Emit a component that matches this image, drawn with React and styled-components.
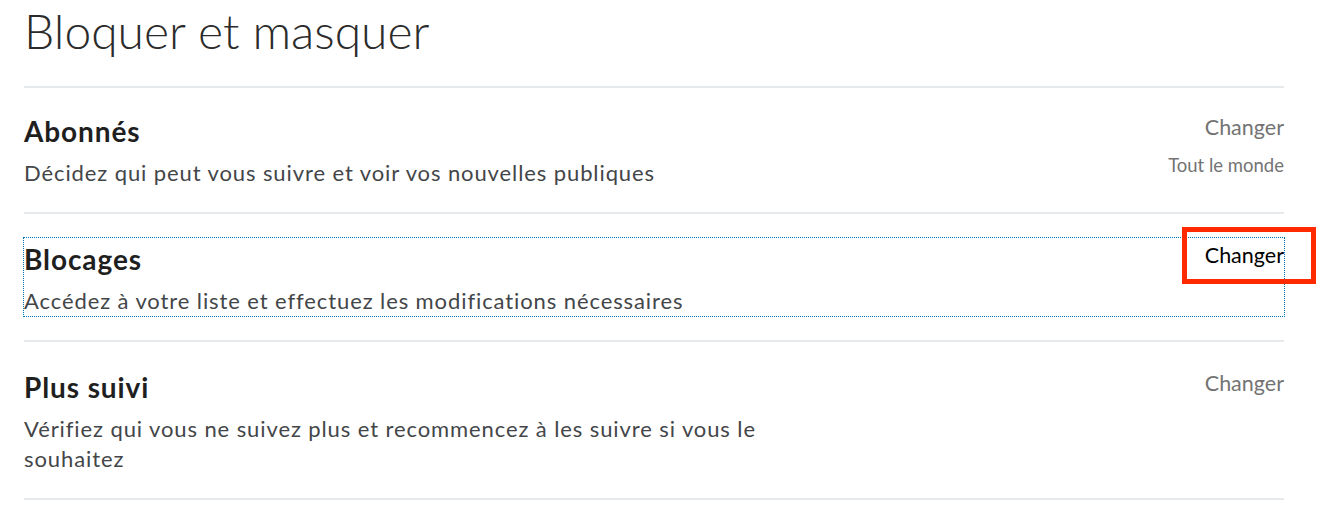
import React from 'react'
import styled, { createGlobalStyle } from 'styled-components'

const GlobalStyle = createGlobalStyle`
  html, body {
    margin: 0;
    padding: 0;
    background: #ffffff;
  }
  body {
    font-family: Lato, "Open Sans", "Liberation Sans", sans-serif;
    -webkit-font-smoothing: antialiased;
  }
`

const Page = styled.div`
  width: 1260px;
  padding: 0 41px 0 24px;
`

const Title = styled.h1`
  margin: 0;
  height: 86px;
  font-size: 48px;
  font-weight: 300;
  line-height: 62px;
  color: #2b2b2b;
`

const List = styled.ul`
  list-style: none;
  margin: 0;
  padding: 0;
`

const Item = styled.li`
  border-top: 2px solid #e6e9ec;
  padding: 22px 0 24px;
  &:last-child {
    border-bottom: 2px solid #e6e9ec;
  }
  & + & {
    padding-top: 24px;
  }
`

const RowLink = styled.a`
  position: relative;
  display: flex;
  justify-content: space-between;
  align-items: flex-start;
  text-decoration: none;
  outline: ${p => (p.$focused ? '1px dotted #0077b5' : 'none')};
  outline-offset: 0;
`

const Text = styled.div`
  max-width: 775px;
`

const Heading = styled.h3`
  margin: 0;
  font-size: 28px;
  font-weight: 700;
  letter-spacing: 0.9px;
  line-height: 42px;
  color: #1f1f1f;
`

const Description = styled.p`
  margin: 6px 0 0;
  font-size: 22px;
  letter-spacing: 0.9px;
  line-height: 30px;
  color: #434649;
`

const Side = styled.div`
  display: flex;
  flex-direction: column;
  align-items: flex-end;
  padding-top: 2px;
`

const Action = styled.span`
  font-size: 21.5px;
  line-height: 30px;
  color: ${p => (p.$active ? '#000000' : '#737373')};
`

const Value = styled.span`
  margin-top: 12px;
  font-size: 18.5px;
  line-height: 22px;
  color: #737373;
`

const Highlight = styled.span`
  position: absolute;
  top: -11px;
  right: -32px;
  width: 134px;
  height: 57px;
  box-sizing: border-box;
  border: 5px solid #ff2a00;
  pointer-events: none;
`

const sections = [
  {
    title: 'Abonnés',
    text: 'Décidez qui peut vous suivre et voir vos nouvelles publiques',
    value: 'Tout le monde',
  },
  {
    title: 'Blocages',
    text: 'Accédez à votre liste et effectuez les modifications nécessaires',
    focused: true,
  },
  {
    title: 'Plus suivi',
    text: 'Vérifiez qui vous ne suivez plus et recommencez à les suivre si vous le souhaitez',
  },
]

export default function App() {
  return (
    <>
      <GlobalStyle />
      <Page>
        <Title>Bloquer et masquer</Title>
        <List>
          {sections.map(s => (
            <Item key={s.title}>
              <RowLink href="#" $focused={s.focused}>
                <Text>
                  <Heading>{s.title}</Heading>
                  <Description>{s.text}</Description>
                </Text>
                <Side>
                  <Action $active={s.focused}>Changer</Action>
                  {s.value && <Value>{s.value}</Value>}
                </Side>
                {s.focused && <Highlight />}
              </RowLink>
            </Item>
          ))}
        </List>
      </Page>
    </>
  )
}
